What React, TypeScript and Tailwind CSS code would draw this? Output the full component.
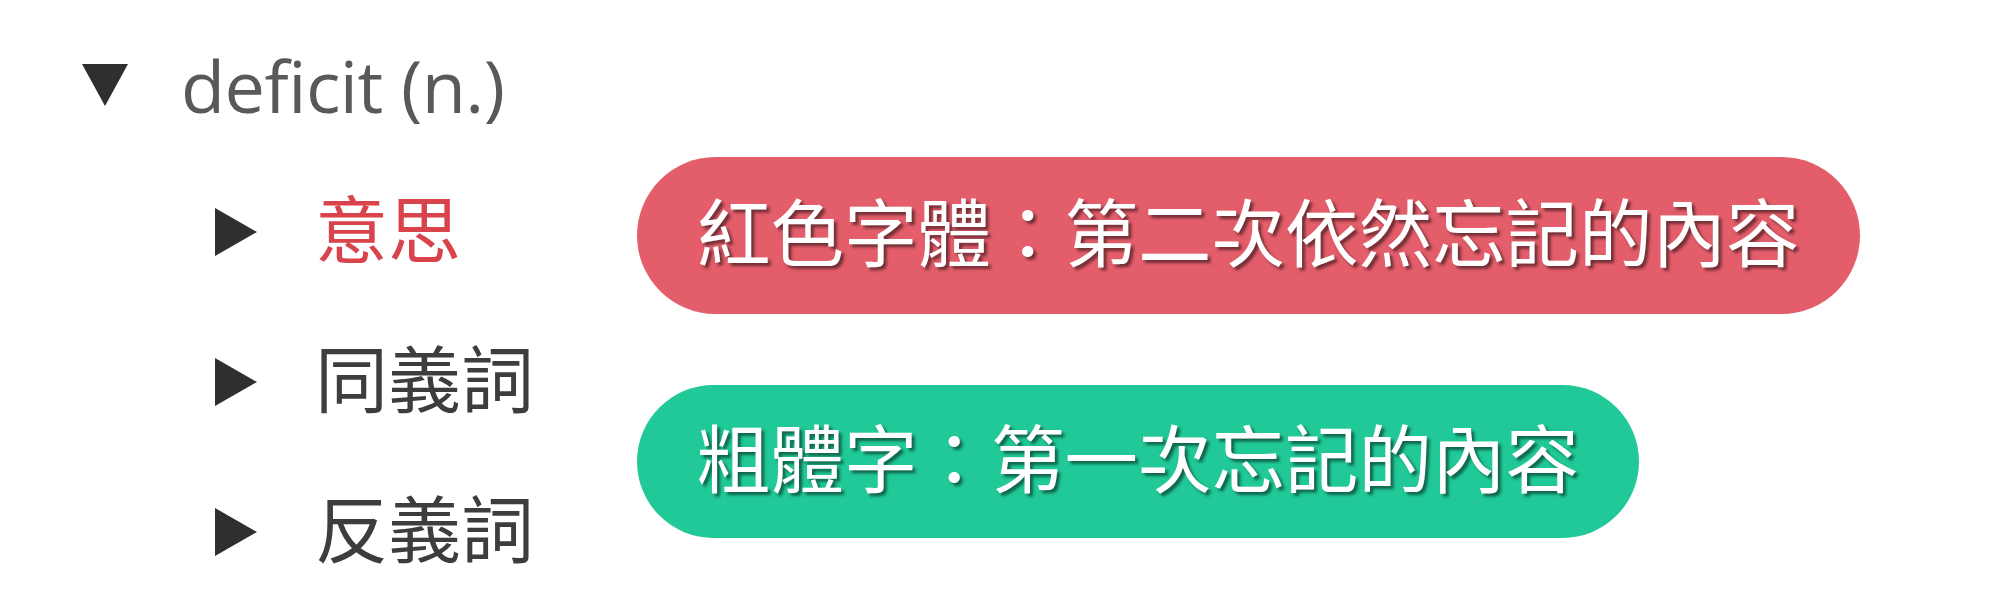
import React from "react";

const fontStack = "font-['Open_Sans','Noto_Sans_CJK_TC',sans-serif]";

const TriangleDown = () => (
  <svg width="46" height="42" viewBox="0 0 46 42" className="shrink-0">
    <polygon points="0,0 46,0 23,42" fill="#2f2f2f" />
  </svg>
);

const TriangleRight = () => (
  <svg width="42" height="48" viewBox="0 0 42 48" className="shrink-0">
    <polygon points="0,0 42,24 0,48" fill="#2f2f2f" />
  </svg>
);

type Entry = {
  label: string;
  color: string;
};

const entries: Entry[] = [
  { label: "意思", color: "text-[#d9434b]" },
  { label: "同義詞", color: "text-[#3d3d3d]" },
  { label: "反義詞", color: "text-[#3d3d3d]" },
];

const Pill = ({ text, bg, height }: { text: string; bg: string; height: string }) => (
  <div
    className={`${bg} ${height} flex items-center rounded-full px-[60px] text-white text-[73.5px] leading-none [text-shadow:3px_3px_3px_rgba(0,0,0,0.5)]`}
  >
    <span className="pb-[6px]">{text}</span>
  </div>
);

export default function App() {
  return (
    <div className={`flex w-[2000px] h-[614px] bg-white ${fontStack}`}>
      <div className="w-[637px] shrink-0 pt-[12px]">
        <div className="flex items-center h-[145px] pl-[82px] gap-[53px]">
          <TriangleDown />
          <span className="text-[72px] leading-none text-[#595959] tracking-[-0.5px]">
            deficit (n.)
          </span>
        </div>
        <ul className="pl-[215px]">
          {entries.map((entry) => (
            <li key={entry.label} className="flex items-center h-[150px] gap-[58px]">
              <TriangleRight />
              <span className={`text-[73px] leading-none pb-[8px] ${entry.color}`}>
                {entry.label}
              </span>
            </li>
          ))}
        </ul>
      </div>
      <div className="flex flex-col items-start pt-[157px] gap-[71px]">
        <Pill text="紅色字體：第二次依然忘記的內容" bg="bg-[#e35d6a]" height="h-[157px]" />
        <Pill text="粗體字：第一次忘記的內容" bg="bg-[#20c997]" height="h-[153px]" />
      </div>
    </div>
  );
}
